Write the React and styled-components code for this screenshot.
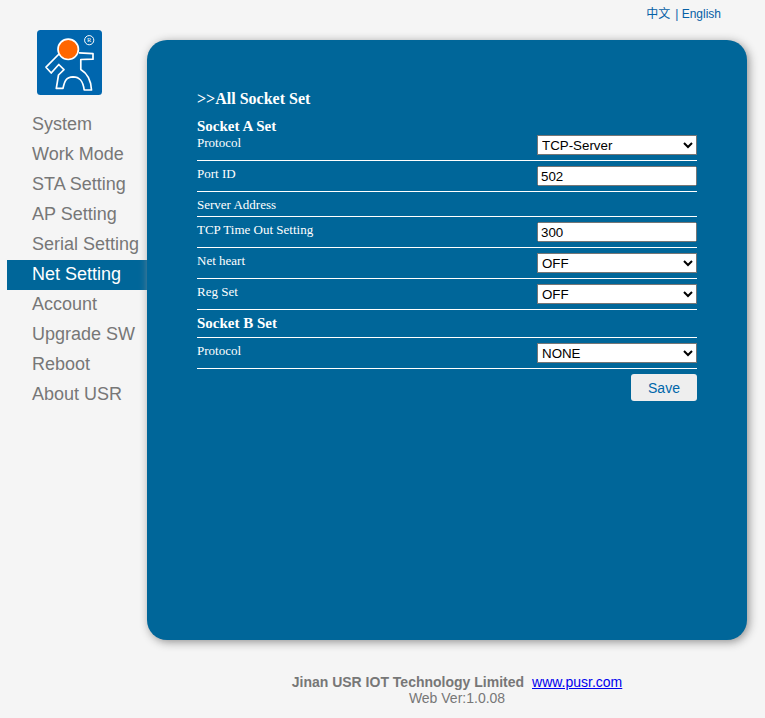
import React from "react";
import styled, { createGlobalStyle } from "styled-components";

const GlobalStyle = createGlobalStyle`
  body {
    margin: 0;
    background: #f5f5f5;
    font-family: "Liberation Sans", Arial, sans-serif;
  }
`;

const Page = styled.div`
  box-sizing: border-box;
  width: 765px;
  height: 718px;
  overflow: hidden;
  display: flex;
  flex-direction: column;
`;

const LanguageBar = styled.div`
  box-sizing: border-box;
  height: 40px;
  padding: 6px 44px 0 0;
  display: flex;
  justify-content: flex-end;
  gap: 5px;
  font-size: 12px;
  line-height: 16px;
  color: #0560a6;
`;

const Language = styled.span`
  font-family: "Liberation Sans", "Noto Sans CJK SC", sans-serif;
  white-space: pre;
`;

const Main = styled.div`
  display: flex;
  height: 600px;
  padding-left: 7px;
`;

const Sidebar = styled.div`
  width: 140px;
  margin-top: -10px;
`;

const Logo = styled.svg`
  display: block;
  width: 65px;
  height: 65px;
  margin: 0 0 15px 30px;
`;

const NavItem = styled.div`
  height: 30px;
  padding-left: 25px;
  font-size: 18px;
  line-height: 28px;
  white-space: nowrap;
  color: ${(p) => (p.$active ? "#fff" : "#777")};
  background: ${(p) => (p.$active ? "#006699" : "transparent")};
`;

const Panel = styled.div`
  box-sizing: border-box;
  position: relative;
  width: 600px;
  height: 600px;
  padding: 50px;
  border-radius: 20px;
  background: #006699;
  box-shadow: 2px 2px 10px #909090;
  color: #fff;
  font-family: "Liberation Serif", "Times New Roman", serif;
`;

const Title = styled.div`
  height: 28px;
  font-size: 16px;
  font-weight: bold;
  line-height: 18px;
`;

const SectionTitle = styled.div`
  font-size: 15px;
  font-weight: bold;
  line-height: 17px;
  ${(p) => p.$ruled && "padding: 5px 0; border-bottom: 1px solid #fff;"}
`;

const Row = styled.div`
  display: flex;
  justify-content: space-between;
  align-items: flex-start;
  padding: ${(p) => (p.$first ? "0 0 5px" : "5px 0")};
  border-bottom: 1px solid #fff;
`;

const Label = styled.div`
  height: 14px;
  font-size: 13px;
  line-height: 15px;
`;

const Select = styled.select`
  box-sizing: border-box;
  width: 160px;
  height: 20px;
  margin: 0;
  font-family: "Liberation Sans", Arial, sans-serif;
  font-size: 13.333px;
  background: #fff;
  color: #000;
`;

const Input = styled.input`
  box-sizing: border-box;
  width: 160px;
  height: 20px;
  margin: 0;
  font-family: "Liberation Sans", Arial, sans-serif;
  font-size: 13.333px;
`;

const Actions = styled.div`
  display: flex;
  justify-content: flex-end;
  padding-top: 5px;
`;

const SaveButton = styled.button`
  width: 66px;
  height: 27px;
  padding: 0;
  border: 0;
  border-radius: 3px;
  background: #eee;
  color: #0066aa;
  font-family: "Liberation Sans", Arial, sans-serif;
  font-size: 14px;
`;

const Footer = styled.div`
  margin: 34px 0 0 149px;
  text-align: center;
  font-size: 14px;
  line-height: 16px;
  color: #777;
`;

const Site = styled.a`
  margin-left: 8px;
  color: #0000ee;
`;

const navItems = [
  "System", "Work Mode", "STA Setting", "AP Setting", "Serial Setting",
  "Net Setting", "Account", "Upgrade SW", "Reboot", "About USR",
];

function Choice({ label, value, first }) {
  return (
    <Row $first={first}>
      <Label>{label}</Label>
      <Select defaultValue={value}>
        <option>{value}</option>
      </Select>
    </Row>
  );
}

function Field({ label, value }) {
  return (
    <Row>
      <Label>{label}</Label>
      <Input defaultValue={value} />
    </Row>
  );
}

function BrandLogo() {
  return (
    <Logo viewBox="0 0 65 65">
      <rect width="65" height="65" rx="3.5" fill="#0066ae" />
      <path
        d="M22 24L9 37.2L14.2 43L21.8 34.5L27 39.7L21.5 45L19.3 58.3H26C27.5 51 29 47 36 46.8C43 46.8 46 51 47.2 60H54.5C54 50 50.5 43.5 43.8 39.5V29.5L56 29.2V23.7L42 22.8"
        fill="none"
        stroke="#fff"
        strokeWidth="1.7"
        strokeLinejoin="round"
      />
      <circle cx="31.2" cy="19.3" r="10.2" fill="#ff6600" stroke="#fff" strokeWidth="1.7" />
      <circle cx="52.2" cy="10.2" r="4.6" fill="none" stroke="#fff" strokeWidth="1" />
      <text x="52.2" y="12.4" textAnchor="middle" fontFamily="Liberation Serif" fontSize="6.5" fill="#fff">R</text>
    </Logo>
  );
}

export default function App() {
  return (
    <Page>
      <GlobalStyle />
      <LanguageBar>
        <Language>{"中文"}</Language>
        <Language>| English</Language>
      </LanguageBar>
      <Main>
        <Sidebar>
          <BrandLogo />
          {navItems.map((item) => (
            <NavItem key={item} $active={item === "Net Setting"}>{item}</NavItem>
          ))}
        </Sidebar>
        <Panel>
          <Title>&gt;&gt;All Socket Set</Title>
          <SectionTitle>Socket A Set</SectionTitle>
          <Choice label="Protocol" value="TCP-Server" first />
          <Field label="Port ID" value="502" />
          <Row><Label>Server Address</Label></Row>
          <Field label="TCP Time Out Setting" value="300" />
          <Choice label="Net heart" value="OFF" />
          <Choice label="Reg Set" value="OFF" />
          <SectionTitle $ruled>Socket B Set</SectionTitle>
          <Choice label="Protocol" value="NONE" />
          <Actions><SaveButton>Save</SaveButton></Actions>
        </Panel>
      </Main>
      <Footer>
        <b>Jinan USR IOT Technology Limited</b>
        <Site href="#">www.pusr.com</Site>
        <div>Web Ver:1.0.08</div>
      </Footer>
    </Page>
  );
}
